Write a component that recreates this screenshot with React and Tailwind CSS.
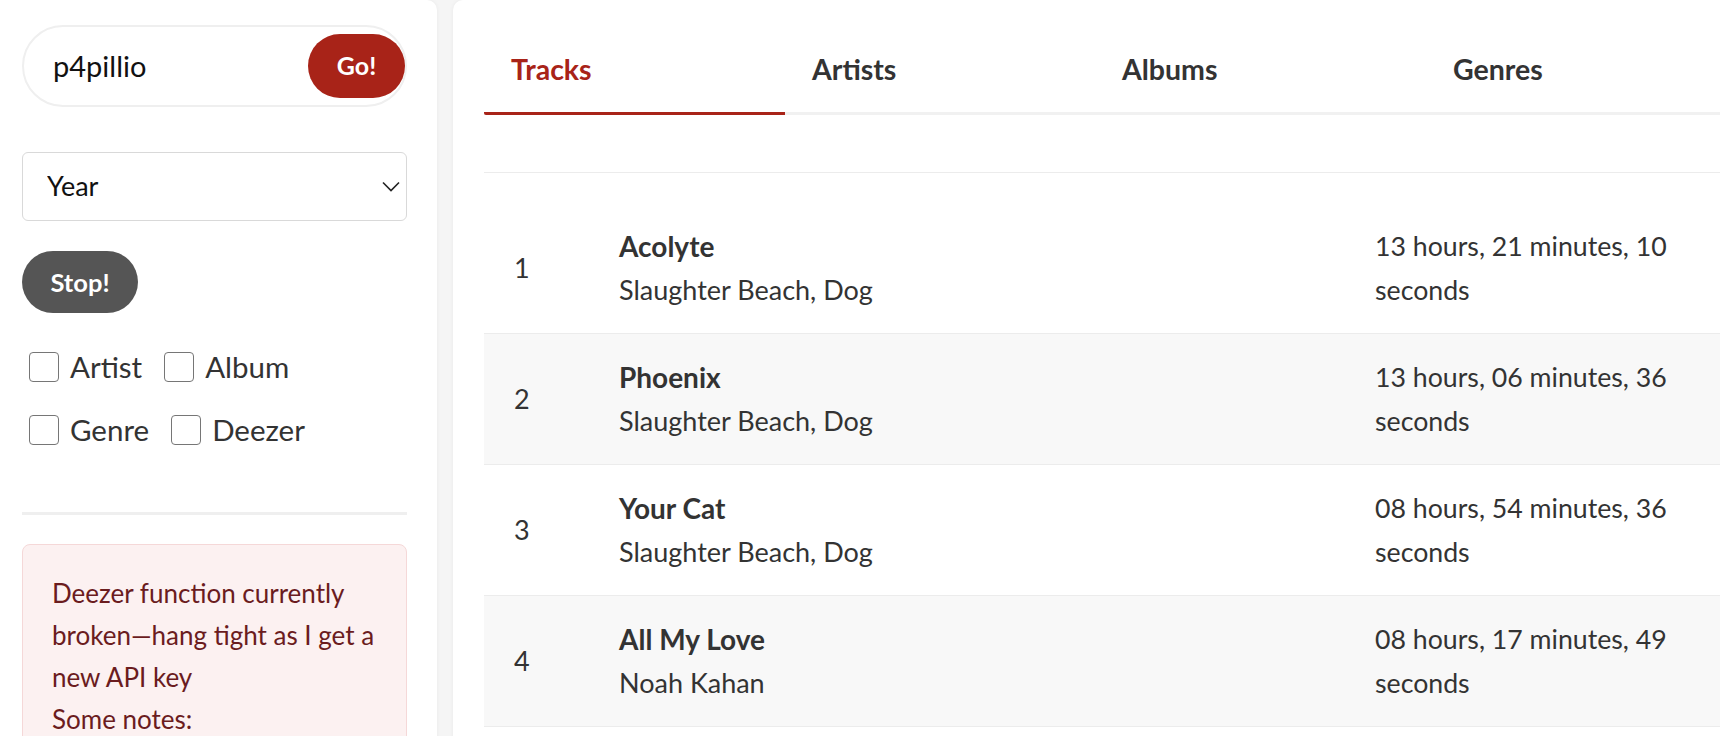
import { useState } from 'react';

const TABS = [
  { label: 'Tracks', width: 'w-[301px]' },
  { label: 'Artists', width: 'w-[310px]' },
  { label: 'Albums', width: 'w-[331px]' },
  { label: 'Genres', width: 'flex-1' },
];

const TRACKS = [
  { title: 'Acolyte', artist: 'Slaughter Beach, Dog', time: '13 hours, 21 minutes, 10 seconds' },
  { title: 'Phoenix', artist: 'Slaughter Beach, Dog', time: '13 hours, 06 minutes, 36 seconds' },
  { title: 'Your Cat', artist: 'Slaughter Beach, Dog', time: '08 hours, 54 minutes, 36 seconds' },
  { title: 'All My Love', artist: 'Noah Kahan', time: '08 hours, 17 minutes, 49 seconds' },
  { title: 'Bad Luck', artist: 'Slaughter Beach, Dog', time: '07 hours, 42 minutes, 03 seconds' },
];

const FILTERS = ['Artist', 'Album', 'Genre', 'Deezer'];

export default function App() {
  const [username, setUsername] = useState('p4pillio');
  const [period, setPeriod] = useState('year');
  const [activeTab, setActiveTab] = useState('Tracks');
  const [checked, setChecked] = useState({});

  return (
    <div className="flex gap-4 min-h-screen bg-[#f5f5f5] font-['Lato',sans-serif] text-[#333]">
      {/* Sidebar */}
      <aside className="w-[437px] shrink-0 bg-white rounded-r-[10px] shadow-[0_0_4px_rgba(0,0,0,0.05)] pl-[22px] pr-[30px] pt-[25px]">
        <div className="flex items-center h-[82px] border-2 border-[#efefef] rounded-full pl-[29px]">
          <input
            value={username}
            onChange={e => setUsername(e.target.value)}
            className="flex-1 min-w-0 text-[29px] text-[#111] bg-transparent outline-none"
          />
          <button className="w-[97px] h-[64px] rounded-full bg-[#a82318] text-white font-bold text-[25px]">
            Go!
          </button>
        </div>

        <div className="relative mt-[45px]">
          <select
            value={period}
            onChange={e => setPeriod(e.target.value)}
            className="w-full h-[69px] appearance-none border border-[#d9d9d9] rounded-[6px] pl-[24px] text-[27px] text-[#111] bg-white outline-none"
          >
            <option value="week">Week</option>
            <option value="month">Month</option>
            <option value="year">Year</option>
            <option value="all">All time</option>
          </select>
          <svg className="absolute right-[7px] top-[29px] pointer-events-none" width="18" height="11" viewBox="0 0 18 11" fill="none">
            <path d="M1 1.5l8 8 8-8" stroke="#222" strokeWidth="1.6" />
          </svg>
        </div>

        <button className="mt-[30px] w-[116px] h-[62px] rounded-full bg-[#555] text-white font-bold text-[25.5px]">
          Stop!
        </button>

        <div className="mt-[39px] flex flex-wrap gap-x-[22px] gap-y-[33px] pl-[7px]">
          {FILTERS.map(name => (
            <label key={name} className="flex items-center gap-[11px] h-[30px] text-[29.5px] text-[#333]">
              <input
                type="checkbox"
                checked={!!checked[name]}
                onChange={() => setChecked(c => ({ ...c, [name]: !c[name] }))}
                className="appearance-none w-[30px] h-[30px] border-[1.5px] border-[#767676] rounded-[4px] bg-white checked:bg-[#a82318]"
              />
              {name}
            </label>
          ))}
        </div>

        <hr className="mt-[67px] border-0 h-[3px] bg-[#efefef]" />

        <div className="mt-[29px] bg-[#fcf1f1] border border-[#f5d8d8] rounded-[8px] pl-[29px] pr-[16px] pt-[27px] pb-6 text-[26px] leading-[42px] text-[#6b1c1e]">
          <p>Deezer function currently broken—hang tight as I get a new API key</p>
          <p>Some notes:</p>
          <ul className="list-disc pl-6">
            <li>Only last.fm scrobbles are counted</li>
            <li>Large libraries take a while</li>
          </ul>
        </div>
      </aside>

      {/* Main panel */}
      <main className="flex-1 min-w-0 bg-white rounded-l-[10px] shadow-[0_0_4px_rgba(0,0,0,0.05)] pl-[31px]">
        <div className="flex border-b-[3px] border-[#f1f1f1]">
          {TABS.map(tab => (
            <button
              key={tab.label}
              onClick={() => setActiveTab(tab.label)}
              className={`${tab.width} text-left pl-[27px] pt-[50px] pb-[23px] leading-[39px] text-[28.5px] font-bold border-b-[3px] -mb-[3px] rounded-bl-[2px] ${
                activeTab === tab.label ? 'text-[#a82318] border-[#a82318]' : 'text-[#333] border-transparent'
              }`}
            >
              {tab.label}
            </button>
          ))}
        </div>

        <div className="h-[58px] border-b border-[#ececec]" />

        <div className="mt-[30px]">
          {TRACKS.map((t, i) => (
            <div
              key={t.title}
              className={`flex items-center h-[131px] border-b border-[#ececec] text-[27px] leading-[44px] ${i % 2 === 1 ? 'bg-[#f8f8f8]' : 'bg-white'}`}
            >
              <div className="w-[135px] shrink-0 pl-[30px]">{i + 1}</div>
              <div className="flex-1 min-w-0">
                <div className="font-bold text-[28px]">{t.title}</div>
                <div>{t.artist}</div>
              </div>
              <div className="w-[345px] shrink-0 pr-[20px] text-[26.7px]">{t.time}</div>
            </div>
          ))}
        </div>
      </main>
    </div>
  );
}
